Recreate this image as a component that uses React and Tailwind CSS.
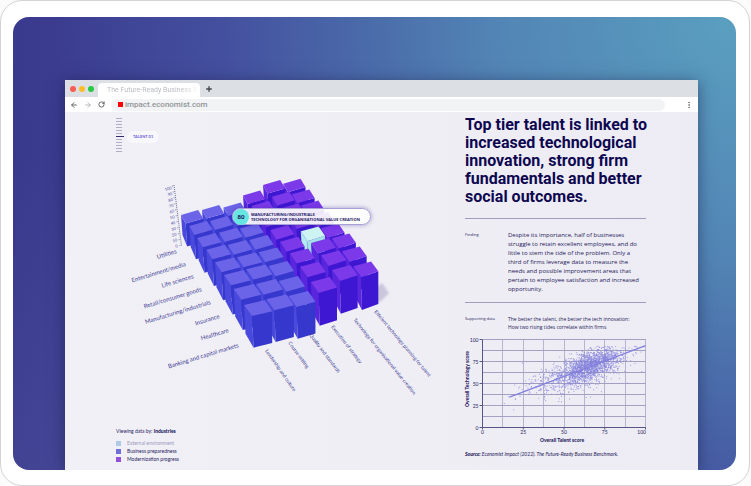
import { ArrowLeft, ArrowRight, RotateCw, Plus, MoreVertical } from "lucide-react";

const BLUE = { top: "#6c64e8", left: "#4a49dd", front: "#3537cd" };
const PURPLE = { top: "#7c39ea", left: "#5926de", front: "#3d17d1" };
const AQUA = { top: "#cdf3f2", left: "#b3ecee", front: "#a4e2ea" };

// Left corner of each bar's top face: one list per column, back row first.
const COLUMNS = [
  [[181, 215], [189.3, 226], [197.3, 238], [206.3, 249.7], [215, 262.3], [224, 275], [233.7, 289], [244, 305]],
  [[202, 210], [210, 221], [219, 232.7], [227.7, 245], [237, 257.3], [246.3, 269.3], [256, 284], [266.3, 299.3]],
  [[223.5, 207.5], [231.7, 217], [240, 228.5], [249.3, 240], [258.7, 252.3], [268.5, 266], [278.7, 281], [288.5, 296]],
  [[243, 195.5], [251.5, 206], [260.7, 217.7], [270.3, 230], [280, 241.7], [289.7, 253.3], [300, 266.7], [310.7, 282]],
  [[263, 185], [272, 196.7], [281, 208.3], [290.7, 219.3], [300.8, 231.3], [311, 243], [321, 255.3], [332, 270]],
  [[283.3, 183.7], [292, 194.3], [301, 205.5], [310.7, 217], [320.7, 228.3], [331.7, 238.3], [342, 251.3], [353.3, 266.3]],
];

const ROW_LABELS = [
  ["Utilities", 177, 253],
  ["Entertainment/media", 186, 266],
  ["Life sciences", 194, 278],
  ["Retail/consumer goods", 202, 291],
  ["Manufacturing/industrials", 211, 304],
  ["Insurance", 220, 318],
  ["Healthcare", 229, 332],
  ["Banking and capital markets", 239, 347],
];

const COLUMN_LABELS = [
  ["Leadership and culture", 265, 351],
  ["Course setting", 288, 343],
  ["Quality and standards", 309, 335],
  ["Execution of strategy", 331, 327],
  ["Technology for organisational value creation", 353, 320],
  ["Efficient technology planning for talent", 374, 312],
];

const points = (list) => list.map((p) => p.join(",")).join(" ");

function Bar({ x, y, row, col }) {
  const t = row / 7;
  const c = col / 5;
  const left = [x, y];
  const back = [x + 17.2 + t * (3.6 - 3 * c), y - 4.9];
  const right = [x + 22.2 + t * (6 - 3.2 * c), y + 3.4 + t * (2.8 - 1.2 * c)];
  const front = [x + 4.6 + t * 3.4, y + 8.6 + t * 2.4];
  const drop = 23 + t * 8.7 + (col > 2 ? 1 : 0);
  const down = ([px, py], lean, h = drop) => [px + lean, py + h];
  const skin = col === 4 && row === 4 ? AQUA : col > 2 ? PURPLE : BLUE;
  return (
    <g>
      <polygon points={points([left, front, down(front, 1.6 - c), down(left, 1.5, drop - 3)])} fill={skin.left} />
      <polygon points={points([front, right, down(right, 0), down(front, 1.6 - c)])} fill={skin.front} />
      <polygon points={points([left, back, right, front])} fill={skin.top} />
    </g>
  );
}

function BarField() {
  const bars = [];
  for (let row = 0; row < 8; row++) {
    for (let col = 5; col >= 0; col--) {
      const [x, y] = COLUMNS[col][row];
      bars.push(<Bar key={`${row}-${col}`} x={x} y={y} row={row} col={col} />);
    }
  }
  return (
    <svg viewBox="116 170 349 250" className="block w-full" role="img" aria-label="Scores by industry and indicator">
      <defs>
        <filter id="soft" x="-50%" y="-50%" width="200%" height="200%">
          <feGaussianBlur stdDeviation="1.2" />
        </filter>
      </defs>
      <polygon points="374,290 382,283 389,293 380,302 374,303" fill="#cbc6dc" filter="url(#soft)" />
      <polygon points="250,203 300,190 366,275 325,295" fill="#4a1bd4" />
      <polygon points="196,222 246,208 318,300 270,312 258,312" fill="#3c3dd0" />
      {bars}
      <path d="M174 185 L181.500 246" stroke="#6b6489" strokeWidth="1" strokeDasharray="1 1" fill="none" />
      <path d="M172.500 185.500 L180 246.500" stroke="#8c86a8" strokeWidth="1" strokeDasharray="1 5" fill="none" />
      <g fill="#4b489b" fontFamily="Lato, sans-serif" fontSize="4" textAnchor="end">
        {Array.from({ length: 11 }, (_, i) => {
          const x = 178 - i * 0.6;
          const y = 247 - i * 5.8;
          return (
            <text key={i} x={x} y={y} transform={`rotate(-16 ${x} ${y})`}>
              {i * 10}
            </text>
          );
        })}
      </g>
      <g fill="#3d3b94" fontFamily="Lato, sans-serif" fontSize="6" textAnchor="end">
        {ROW_LABELS.map(([label, x, y]) => (
          <text key={label} x={x} y={y} transform={`rotate(-17 ${x} ${y})`}>
            {label}
          </text>
        ))}
      </g>
      <g fill="#3d3b94" fontFamily="Lato, sans-serif" fontSize="5">
        {COLUMN_LABELS.map(([label, x, y], i) => (
          <text key={label} x={x} y={y} transform={`rotate(${55 - i} ${x} ${y})`}>
            {label}
          </text>
        ))}
      </g>
    </svg>
  );
}

function makeFirms(count) {
  let seed = 20227;
  const random = () => {
    seed = (seed * 16807) % 2147483647;
    return seed / 2147483647;
  };
  const normal = () => Math.sqrt(-2 * Math.log(random())) * Math.cos(2 * Math.PI * random());
  const firms = [];
  while (firms.length < count) {
    const wide = random() < 0.3;
    const talent = (wide ? 57 : 67) + normal() * (wide ? 15 : 9);
    const tech = 71 + (talent - 67) * 0.6 + normal() * (wide ? 10 : 8) + (wide ? -3 : 1);
    if (talent > 12 && talent < 99 && tech > 3 && tech < 93) firms.push([talent, tech]);
  }
  return firms;
}

const FIRMS = makeFirms(2000);
const STEPS = [0, 12.5, 25, 37.5, 50, 62.5, 75, 87.5, 100];

function ScatterChart() {
  const px = (v) => 17.5 + v * 1.63;
  const py = (v) => 91.5 - v * 0.88;
  return (
    <svg viewBox="0 0 181 108" className="mt-[5px] block w-full overflow-visible" role="img" aria-label="Overall talent score against overall technology score">
      <g stroke="#a3a0c2" strokeWidth="1" shapeRendering="crispEdges">
        {STEPS.map((v) => (
          <g key={v}>
            <line x1={px(v)} x2={px(v)} y1={py(100)} y2={py(0)} strokeOpacity="0.75" />
            <line x1={px(0)} x2={px(100)} y1={py(v)} y2={py(v)} />
          </g>
        ))}
      </g>
      <g fill="#8683dc" fillOpacity="0.75">
        {FIRMS.map(([a, b], i) => (
          <rect key={i} x={px(a)} y={py(b)} width="1" height="1" />
        ))}
      </g>
      <line x1={px(16.5)} y1={py(34.5)} x2={px(100)} y2={py(93)} stroke="#8280dc" strokeWidth="1.3" />
      <path d={`M${px(0)} ${py(100)}V${py(0)}H${px(100)}`} fill="none" stroke="#575486" strokeWidth="1" />
      <g fill="#25215f" fontFamily="Lato, sans-serif" fontSize="5">
        {[0, 25, 50, 75, 100].map((v) => (
          <g key={v}>
            <line x1={px(0) - 3} x2={px(0)} y1={py(v)} y2={py(v)} stroke="#575486" />
            <line x1={px(v)} x2={px(v)} y1={py(0)} y2={py(0) + 2} stroke="#575486" />
            <text x={px(0) - 4} y={py(v) + 2} textAnchor="end">{v}</text>
            <text x={v === 100 ? 181 : px(v)} y="98" textAnchor={v === 100 ? "end" : "middle"}>{v}</text>
          </g>
        ))}
        <text x="97" y="106" textAnchor="middle" fontWeight="900">Overall Talent score</text>
        <text x="4" y="43" textAnchor="middle" fontWeight="900" transform="rotate(-90 4 43)">Overall Technology score</text>
      </g>
    </svg>
  );
}

function SectionRail() {
  return (
    <div className="flex items-center gap-[3px]">
      <div className="flex w-2 flex-col gap-0.5">
        {Array.from({ length: 12 }, (_, i) => (
          <span key={i} className={i === 6 ? "h-px w-2 bg-[#2f2a72]" : "h-px w-1.5 bg-[#b0adc6]"} />
        ))}
      </div>
      <a href="#talent" className="mt-1 rounded-full bg-[#f8f8fc] px-1.5 py-1 text-[4px] leading-[4px] font-bold text-[#6f62d8]">TALENT 01</a>
    </div>
  );
}

function Legend() {
  return (
    <div className="text-[5px] leading-[6px] text-[#25215f]">
      <p>Viewing data by: <strong className="font-black">Industries</strong></p>
      <ul className="mt-1.5 flex flex-col gap-0.5">
        <li className="flex items-center gap-1.5 text-[#9a98bb]"><span className="size-[5px] bg-[#adcbe8]" />External environment</li>
        <li className="flex items-center gap-1.5"><span className="size-[5px] bg-[#706fd9]" />Business preparedness</li>
        <li className="flex items-center gap-1.5"><span className="size-[5px] bg-[#9251d8]" />Modernization progress</li>
      </ul>
    </div>
  );
}

function BrowserChrome() {
  return (
    <header>
      <div className="flex h-[17px] items-center bg-[#dcdfe4] pl-[5px]">
        <div className="flex gap-[3px]">
          <span className="size-[6px] rounded-full bg-[#fb5d55]" />
          <span className="size-[6px] rounded-full bg-[#fcbc2d]" />
          <span className="size-[6px] rounded-full bg-[#28ca41]" />
        </div>
        <button className="ml-1 h-[14px] w-[102px] self-end rounded-t bg-white pl-[9px] text-left font-[Roboto,sans-serif] text-[7px] leading-[14px] whitespace-nowrap">
          <span className="inline-block bg-linear-to-r from-[#b4b6bb] from-80% to-white bg-clip-text text-transparent">The Future-Ready Business B</span>
        </button>
        <button aria-label="New tab" className="ml-[5px] text-[#45484c]"><Plus size={8} strokeWidth={4} /></button>
      </div>
      <div className="flex h-[15px] items-center bg-white px-[5px]">
        <button aria-label="Back" className="text-[#66696d]"><ArrowLeft size={8} strokeWidth={3} /></button>
        <button aria-label="Forward" className="ml-1.5 text-[#b9bbbe]"><ArrowRight size={8} strokeWidth={3} /></button>
        <button aria-label="Reload" className="ml-1.5 text-[#55585c]"><RotateCw size={7} strokeWidth={3} /></button>
        <label className="ml-1.5 flex h-3 flex-1 items-center gap-0.5 rounded-full bg-[#f1f3f4] pl-[7px]">
          <span className="size-[5px] bg-[#ff0000]" />
          <input aria-label="Address" defaultValue="impact.economist.com" className="h-3 flex-1 bg-transparent font-[Roboto,sans-serif] text-[8px] leading-3 font-medium text-[#929497] outline-none" />
        </label>
        <button aria-label="Menu" className="ml-5 text-[#77797c]"><MoreVertical size={8} strokeWidth={3} /></button>
      </div>
    </header>
  );
}

export default function App() {
  return (
    <div className="flex h-screen w-full bg-[#fbfbfb] pr-px font-[Lato,sans-serif]">
      <div className="flex min-w-0 flex-1 rounded-[22px] border border-[#d3d3d3] bg-white pt-4 pr-[13px] pb-[15px] pl-3">
        <div className="flex min-w-0 flex-1 overflow-hidden rounded-2xl bg-[radial-gradient(circle_at_10%_110%,rgba(96,104,172,0.4)_0%,rgba(96,104,172,0)_45%),radial-gradient(circle_at_100%_0%,#5a9fc0_0%,#5285b5_28%,#4a6aa9_44%,#44509f_60%,#3b3c90_80%,#343187_100%)] pt-[63px] pr-[38px] pl-[52px]">
          <div className="flex min-w-0 flex-1 flex-col bg-[#f0eff5] shadow-[0_2px_14px_rgba(20,20,60,0.5)]">
            <BrowserChrome />
            <main className="flex min-h-0 flex-1 bg-linear-to-r from-[#f1f0f6] to-[#edecf4] pr-[52px] pl-[51px]">
              <section className="flex min-w-0 flex-1 flex-col pt-1.5 pb-2">
                <SectionRail />
                <figure className="relative mt-[18px]">
                  <BarField />
                  <figcaption className="absolute top-[38px] left-[116px] flex h-[17px] w-[139px] items-center rounded-full border border-[#a7a0d6] bg-white/90 shadow-[0_0_4px_rgba(60,40,150,0.45)]">
                    <span className="flex size-4 shrink-0 items-center justify-center rounded-full bg-[#67e5e2] text-[6px] font-black text-[#17135a]">80</span>
                    <span className="pl-0.5 font-['Open_Sans',sans-serif] text-[4px] leading-[5px] font-bold whitespace-nowrap text-[#1d1860]">
                      MANUFACTURING/INDUSTRIALS
                      <br />
                      TECHNOLOGY FOR ORGANISATIONAL VALUE CREATION
                    </span>
                  </figcaption>
                </figure>
                <div className="mt-auto"><Legend /></div>
              </section>
              <article className="w-[181px] shrink-0 pt-1 text-[#1d1858]">
                <h1 className="font-[Roboto,sans-serif] text-[16px] leading-[18px] font-bold whitespace-nowrap text-[#0d0750]">
                  Top tier talent is linked to
                  <br />
                  increased technological
                  <br />
                  innovation, strong firm
                  <br />
                  fundamentals and better
                  <br />
                  social outcomes.
                </h1>
                <div className="mt-3 flex border-t border-[#a09ebc] pt-3">
                  <h2 className="w-[43px] shrink-0 font-['Open_Sans',sans-serif] text-[4px] leading-[8px]">Finding</h2>
                  <p className="font-['Open_Sans',sans-serif] text-[6px] leading-[9px] font-medium whitespace-nowrap">
                    Despite its importance, half of businesses
                    <br />
                    struggle to retain excellent employees, and do
                    <br />
                    little to stem the tide of the problem. Only a
                    <br />
                    third of firms leverage data to measure the
                    <br />
                    needs and possible improvement areas that
                    <br />
                    pertain to employee satisfaction and increased
                    <br />
                    opportunity.
                  </p>
                </div>
                <div className="mt-2 flex border-t border-[#a09ebc] pt-3">
                  <h2 className="w-[43px] shrink-0 font-['Open_Sans',sans-serif] text-[4px] leading-[8px]">Supporting data</h2>
                  <p className="font-['Open_Sans',sans-serif] text-[5px] leading-[8px] font-medium whitespace-nowrap">The better the talent, the better the tech innovation:<br />How two rising tides correlate within firms</p>
                </div>
                <ScatterChart />
                <p className="mt-[7px] text-[5px] leading-[6px] whitespace-nowrap italic"><strong className="font-black">Source:</strong> Economist Impact (2022). The Future-Ready Business Benchmark.</p>
              </article>
            </main>
          </div>
        </div>
      </div>
    </div>
  );
}
